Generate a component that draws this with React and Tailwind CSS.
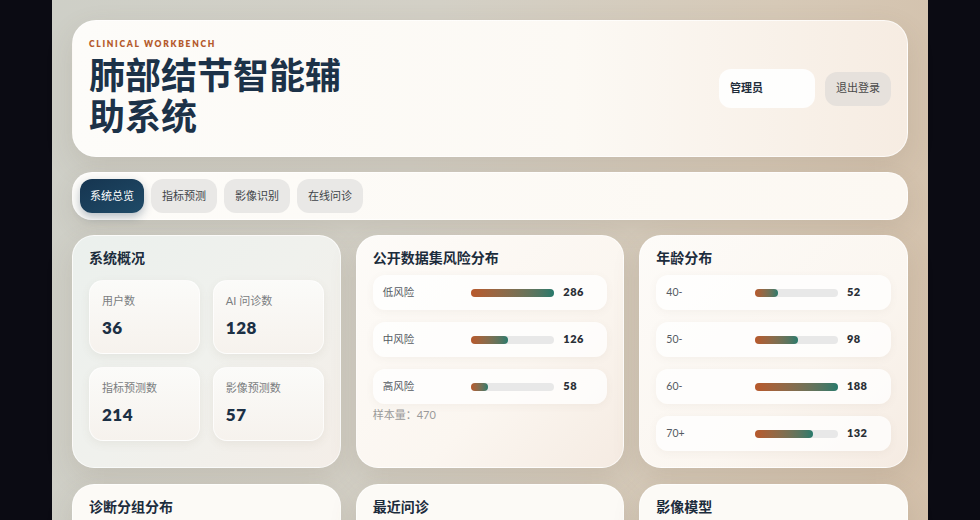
import React from "react";

const stats = [
  { label: "用户数", value: 36 },
  { label: "AI 问诊数", value: 128 },
  { label: "指标预测数", value: 214 },
  { label: "影像预测数", value: 57 },
];

const risk = [
  { label: "低风险", value: 286 },
  { label: "中风险", value: 126 },
  { label: "高风险", value: 58 },
];

const ages = [
  { label: "40-", value: 52 },
  { label: "50-", value: 98 },
  { label: "60-", value: 188 },
  { label: "70+", value: 132 },
];

const tabs = ["系统总览", "指标预测", "影像识别", "在线问诊"];

function Card({ title, className = "", children }) {
  return (
    <div
      className={`rounded-[22px] border border-white/70 px-[16px] pt-[12px] shadow-[0_10px_28px_rgba(110,90,70,0.14)] ${className}`}
    >
      <h2 className="text-[14px] font-bold leading-[20px] text-[#1c2c3c]">{title}</h2>
      {children}
    </div>
  );
}

function BarRows({ rows }) {
  const max = Math.max(...rows.map((r) => r.value));
  return (
    <div className="mt-[7px] flex flex-col gap-[12px]">
      {rows.map((r) => (
        <div
          key={r.label}
          className="grid h-[35px] grid-cols-[1fr_83px_34px] items-center gap-[9px] rounded-[12px] bg-white/75 px-[10px] shadow-[0_2px_8px_rgba(120,100,80,0.06)]"
        >
          <span className="text-[10.5px] text-[#555b62]">{r.label}</span>
          <div className="h-[8px] rounded-full bg-[#e8e8e8]">
            <div
              className="h-full rounded-full bg-gradient-to-r from-[#b8582a] to-[#25796b]"
              style={{ width: `${(r.value / max) * 100}%` }}
            />
          </div>
          <span className="text-[11px] font-extrabold tracking-[0.04em] text-[#2a2f36]">{r.value}</span>
        </div>
      ))}
    </div>
  );
}

export default function App() {
  return (
    <div className="flex h-[520px] justify-center overflow-hidden bg-[#0b0b13] font-['Lato','Noto_Sans_CJK_SC',sans-serif]">
      <div className="flex h-full w-[876px] flex-col bg-[linear-gradient(100deg,#cecfc7_0%,#d3d0c6_40%,#d6c9b7_75%,#d3c0aa_100%)] px-[20px] pt-[20px]">
        <header className="flex h-[137px] shrink-0 items-center justify-between rounded-[24px] border border-white/70 bg-[linear-gradient(90deg,#fdfcf9_0%,#fcf9f4_60%,#f6ece2_100%)] pl-[16px] pr-[16px] shadow-[0_10px_28px_rgba(110,90,70,0.14)]">
          <div className="pb-[4px]">
            <div className="text-[8.5px] font-extrabold leading-[14px] tracking-[0.2em] text-[#b45a2c]">
              CLINICAL WORKBENCH
            </div>
            <h1 className="mt-[4px] w-[260px] text-[36px] font-bold leading-[41px] text-[#1c3248]">
              肺部结节智能辅助系统
            </h1>
          </div>
          <div className="flex items-center gap-[10px]">
            <div className="flex h-[39px] w-[96px] items-center rounded-[12px] bg-white/90 px-[11px] text-[11px] font-bold text-[#1f2d3b]">
              管理员
            </div>
            <button className="h-[34px] rounded-[12px] bg-[#e6e1dc] px-[11px] text-[11px] text-[#4a4a4a]">
              退出登录
            </button>
          </div>
        </header>

        <nav className="mt-[15px] flex h-[48px] shrink-0 items-center gap-[7px] rounded-[20px] border border-white/70 bg-[linear-gradient(90deg,#fdfcf9_0%,#fcf8f2_100%)] px-[7px] shadow-[0_8px_22px_rgba(110,90,70,0.12)]">
          {tabs.map((t, i) => (
            <button
              key={t}
              className={
                i === 0
                  ? "h-[34px] rounded-[12px] bg-gradient-to-br from-[#163550] to-[#1f4b68] px-[10px] text-[11px] text-white shadow-[0_4px_10px_rgba(20,50,80,0.3)]"
                  : "h-[34px] rounded-[12px] bg-[#e9e8e6] px-[11px] text-[11px] text-[#404449]"
              }
            >
              {t}
            </button>
          ))}
        </nav>

        <div className="mt-[15px] grid shrink-0 grid-cols-3 gap-x-[15px] gap-y-[16px]">
          <Card
            title="系统概况"
            className="h-[233px] bg-[linear-gradient(135deg,#ebf0ed_0%,#f0f1ed_50%,#f4eee8_100%)]"
          >
            <div className="mt-[12px] grid grid-cols-2 gap-[13px]">
              {stats.map((s) => (
                <div
                  key={s.label}
                  className="h-[74px] rounded-[14px] border border-white/70 bg-[linear-gradient(180deg,#fbfbf9_0%,#f6f2ed_100%)] px-[12px] pt-[12px] shadow-[0_3px_10px_rgba(120,100,80,0.08)]"
                >
                  <div className="text-[11px] leading-[16px] text-[#7a7d80]">{s.label}</div>
                  <div className="mt-[9px] text-[17px] font-extrabold leading-[20px] tracking-[0.03em] text-[#1c3045]">
                    {s.value}
                  </div>
                </div>
              ))}
            </div>
          </Card>

          <Card
            title="公开数据集风险分布"
            className="h-[233px] bg-[linear-gradient(135deg,#fdfbf8_0%,#fbf6f0_60%,#f5ebe2_100%)]"
          >
            <BarRows rows={risk} />
            <div className="mt-[3px] text-[11px] leading-[16px] text-[#9a9a9a]">样本量：470</div>
          </Card>

          <Card
            title="年龄分布"
            className="h-[233px] bg-[linear-gradient(135deg,#fdfbf8_0%,#fbf6f0_60%,#f5ebe2_100%)]"
          >
            <BarRows rows={ages} />
          </Card>

          <Card title="诊断分组分布" className="h-[200px] bg-[#fcfaf6]" />
          <Card title="最近问诊" className="h-[200px] bg-[#fcfaf6]" />
          <Card title="影像模型" className="h-[200px] bg-[#fcfaf6]" />
        </div>
      </div>
    </div>
  );
}
